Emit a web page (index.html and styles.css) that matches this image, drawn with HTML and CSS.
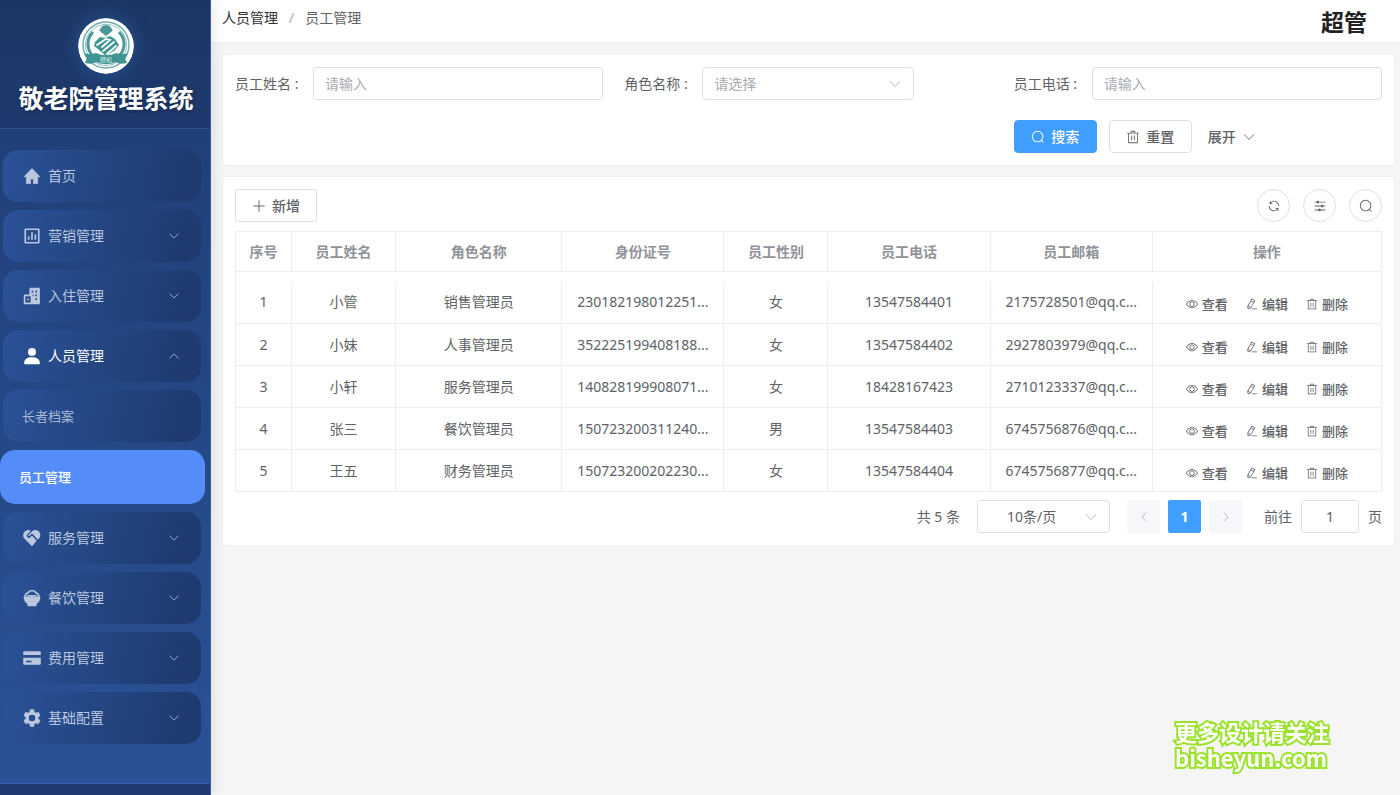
FILE: index.html
```html
<!DOCTYPE html>
<html lang="zh-CN">
<head>
<meta charset="utf-8">
<title>敬老院管理系统</title>
<link rel="stylesheet" href="styles.css">
</head>
<body>
<svg class="sprite" aria-hidden="true">
  <symbol id="down" viewBox="0 0 16 16"><path d="M2.500 5.300 8 10.700l5.500-5.400" fill="none" stroke="currentColor" stroke-linecap="round" stroke-linejoin="round"/></symbol>
  <symbol id="search" viewBox="0 0 1024 1024"><path d="m795.904 750.720 124.992 124.928a32 32 0 0 1-45.248 45.248L750.656 795.904a416 416 0 1 1 45.248-45.248zM480 832a352 352 0 1 0 0-704 352 352 0 0 0 0 704"/></symbol>
  <symbol id="trash" viewBox="0 0 1024 1024"><path d="M160 256H96a32 32 0 0 1 0-64h256V95.936a32 32 0 0 1 32-32h256a32 32 0 0 1 32 32V192h256a32 32 0 1 1 0 64h-64v672a32 32 0 0 1-32 32H192a32 32 0 0 1-32-32zm448-64v-64H416v64zM224 896h576V256H224zm192-128a32 32 0 0 1-32-32V416a32 32 0 0 1 64 0v320a32 32 0 0 1-32 32m192 0a32 32 0 0 1-32-32V416a32 32 0 0 1 64 0v320a32 32 0 0 1-32 32"/></symbol>
  <symbol id="view" viewBox="0 0 1024 1024"><path d="M512 160c320 0 512 352 512 352S832 864 512 864 0 512 0 512s192-352 512-352m0 64c-225.280 0-384.128 208.064-436.800 288 52.608 79.872 211.456 288 436.800 288 225.280 0 384.128-208.064 436.800-288-52.608-79.872-211.456-288-436.800-288m0 64a224 224 0 1 1 0 448 224 224 0 0 1 0-448m0 64a160.192 160.192 0 0 0-160 160c0 88.192 71.744 160 160 160s160-71.808 160-160-71.744-160-160-160"/></symbol>
  <symbol id="edit" viewBox="0 0 1024 1024"><path d="m199.040 672.640 193.984 112 224-387.968-193.920-112-224 388.032zm-23.872 60.160 32.896 148.288 144.896-45.696zM455.040 229.248l193.920 112 56.704-98.112-193.984-112-56.640 98.112zM104.320 708.800l384-665.024 304.768 175.936L409.152 884.800h.064l-248.448 78.336zm384 254.272v-64h448v64h-448z"/></symbol>
  <symbol id="refresh" viewBox="0 0 1024 1024"><path d="M771.776 794.880A384 384 0 0 1 128 512h64a320 320 0 0 0 555.712 216.448H654.720a32 32 0 1 1 0-64h149.056a32 32 0 0 1 32 32v148.928a32 32 0 1 1-64 0v-50.560zM276.288 295.616h92.992a32 32 0 0 1 0 64H220.160a32 32 0 0 1-32-32V178.560a32 32 0 0 1 64 0v50.560A384 384 0 0 1 896.128 512h-64a320 320 0 0 0-555.776-216.384z"/></symbol>
  <symbol id="operation" viewBox="0 0 1024 1024"><path d="M389.440 768a96.064 96.064 0 0 1 181.120 0H896v64H570.560a96.064 96.064 0 0 1-181.120 0H128v-64zm192-288a96.064 96.064 0 0 1 181.120 0H896v64H762.560a96.064 96.064 0 0 1-181.120 0H128v-64zm-320-288a96.064 96.064 0 0 1 181.120 0H896v64H442.560a96.064 96.064 0 0 1-181.120 0H128v-64z"/></symbol>
  <symbol id="plus" viewBox="0 0 16 16"><path d="M8 2v12M2 8h12" fill="none" stroke="currentColor" stroke-width="1.100" stroke-linecap="round"/></symbol>
  <symbol id="home" viewBox="0 0 24 24"><path d="M10 22v-6h4v6h5.500v-9H22.500L12 2 1.500 13h3v9z" stroke="currentColor" stroke-linejoin="round"/></symbol>
  <symbol id="chart" viewBox="0 0 24 24"><path d="M3 3h18v18H3zM7.500 12.500V17M12 7v10M16.500 10v7" fill="none" stroke="currentColor" stroke-width="2.200" stroke-linejoin="round"/></symbol>
  <symbol id="building" viewBox="0 0 24 24"><path fill-rule="evenodd" d="M10 1h11a1.500 1.500 0 0 1 1.500 1.500v19A1.500 1.500 0 0 1 21 23H2.500A1.500 1.500 0 0 1 1 21.500v-10A1.500 1.500 0 0 1 2.500 10h6V2.500A1.500 1.500 0 0 1 10 1zM3.200 12.200v8.600h7v-8.600zm2.500 3.300h2.300v2.300H5.700zM11.500 5v2.200h2.200V5zm5 0v2.200h2.200V5zm0 5v2.200h2.200V10zm0 5v2.200h2.200V15zm-3.500-5v2.200h1.200V10z"/></symbol>
  <symbol id="user" viewBox="0 0 24 24"><circle cx="12" cy="6.500" r="5.300"/><path d="M1.500 21.500C1.500 16 6 13.500 12 13.500s10.500 2.500 10.500 8c0 .8-.5 1.500-1.500 1.500H3c-1 0-1.500-.7-1.500-1.500z"/></symbol>
  <symbol id="care" viewBox="0 0 24 24"><path d="M12 23 1.700 12.600C-1.200 9 .3 4 3.800 2.200 6 1.100 8.700 1.300 10.400 2.300L5.700 7.200a2.700 2.700 0 0 0 4 3.700l2.200-2.100 6.300 7z"/><path d="m19.800 14.200-6.700-7.300a1.600 1.600 0 0 0-2.200 0L8.500 9.300a.9.900 0 0 1-1.300-1.300l5-5.100c3.400-2.400 7.300-1.700 9.500 1.100 2.500 3.300 1.600 7-1.900 10.200z"/></symbol>
  <symbol id="bowl" viewBox="0 0 24 24"><path d="M.8 10h22.400c0 4.500-2 8.200-5.200 10v3H6v-3C2.800 18.200.8 14.500.8 10z"/><path d="M2.500 10.500C3 7.500 4.500 5.500 6.800 5 8 2.800 10 2 12 2s4 .8 5.200 3c2.300.5 3.800 2.500 4.300 5.500" fill="none" stroke="currentColor" stroke-width="2.200"/><path d="M5 10c.5-1.500 1.500-2 3-2h8c1.500 0 2.500.5 3 2z"/></symbol>
  <symbol id="card" viewBox="0 0 24 24"><path fill-rule="evenodd" d="M1.500 3h21A1.200 1.200 0 0 1 23.700 4.200V8H.3V4.200A1.200 1.200 0 0 1 1.500 3zM.3 11.500h23.400v8.300a1.200 1.200 0 0 1-1.200 1.200h-21A1.200 1.200 0 0 1 .3 19.800zm3.700 4v2.300h7.500v-2.300z"/></symbol>
  <symbol id="gear" viewBox="2 2 20 20"><path d="M19.140 12.940c.04-.3.060-.61.060-.94s-.02-.64-.07-.94l2.030-1.580a.49.490 0 0 0 .12-.61l-1.920-3.320a.488.488 0 0 0-.59-.22l-2.390.96c-.5-.38-1.030-.7-1.620-.94l-.36-2.540a.484.484 0 0 0-.48-.41h-3.840c-.24 0-.43.170-.47.410l-.36 2.540c-.59.240-1.130.570-1.620.940l-2.390-.96a.477.477 0 0 0-.59.220L2.740 8.870c-.12.210-.08.470.12.610l2.030 1.580c-.05.300-.09.630-.09.940s.02.640.070.940l-2.030 1.580a.49.490 0 0 0-.12.610l1.920 3.320c.12.220.370.290.590.220l2.390-.96c.5.380 1.030.700 1.620.940l.36 2.540c.05.240.240.410.480.410h3.840c.24 0 .44-.17.470-.41l.36-2.540c.59-.24 1.130-.56 1.620-.94l2.390.96c.22.080.470 0 .59-.22l1.920-3.320c.12-.22.070-.47-.12-.61zM12 15.600a3.600 3.600 0 1 1 0-7.200 3.600 3.600 0 0 1 0 7.200z"/></symbol>
</svg>
<div class="app">
  <aside class="sidebar">
    <div class="brand">
      <svg class="logo" viewBox="0 0 56 56" role="img" aria-label="颐和">
        <circle cx="28" cy="28" r="28" fill="#fff"/>
        <g fill="none" stroke="#6fb0af"><circle cx="28" cy="27" r="23" stroke-width="1.500"/><circle cx="28" cy="27" r="20.500" stroke-width=".8"/></g>
        <path d="M15 14C8 21 9 31 14 37M41 14c7 7 6 17 1 23" fill="none" stroke="#4a9998" stroke-width="3"/>
        <path d="M23 10c1-3 3-2 5-3 2 1 4 0 5 3 2 1 2 3 0 4l-5 4-5-4c-2-1-2-3 0-4z" fill="#4a9998"/>
        <path d="m17 24 5-5 5 1 5-2 5 3 4 6-4 5-9 6-8-7-4-3z" fill="#3f9594"/>
        <path d="m19 27 9-6 4 1-8 7M25 33l11-9M29 36l9-8" fill="none" stroke="#fff" stroke-width="1.800" stroke-linecap="round"/>
        <path d="M6 35c5 2 9 1 12 0 6 3 14 3 20 0 3 1 7 2 12 0l-3 5 2 5c-5 1-8 1-11-1-7 3-13 3-20 0-3 2-6 2-11 1l2-5z" fill="#3f9594"/>
        <text class="logo-text" x="28" y="44" text-anchor="middle">颐和</text>
      </svg>
      <h1 class="brand-name">敬老院管理系统</h1>
    </div>
    <nav class="menu">
      <a class="item" href="#"><svg class="mi"><use href="#home"/></svg><span>首页</span></a>
      <a class="item" href="#"><svg class="mi"><use href="#chart"/></svg><span>营销管理</span><svg class="arrow"><use href="#down"/></svg></a>
      <a class="item" href="#"><svg class="mi"><use href="#building"/></svg><span>入住管理</span><svg class="arrow"><use href="#down"/></svg></a>
      <a class="item open" href="#"><svg class="mi"><use href="#user"/></svg><span>人员管理</span><svg class="arrow"><use href="#down"/></svg></a>
      <a class="item sub" href="#">长者档案</a>
      <a class="item sub active" href="#" aria-current="page">员工管理</a>
      <a class="item" href="#"><svg class="mi"><use href="#care"/></svg><span>服务管理</span><svg class="arrow"><use href="#down"/></svg></a>
      <a class="item" href="#"><svg class="mi"><use href="#bowl"/></svg><span>餐饮管理</span><svg class="arrow"><use href="#down"/></svg></a>
      <a class="item" href="#"><svg class="mi"><use href="#card"/></svg><span>费用管理</span><svg class="arrow"><use href="#down"/></svg></a>
      <a class="item" href="#"><svg class="mi"><use href="#gear"/></svg><span>基础配置</span><svg class="arrow"><use href="#down"/></svg></a>
    </nav>
    <div class="side-foot"></div>
  </aside>
  <div class="page">
    <header class="topbar">
      <nav class="crumbs"><a href="#">人员管理</a><span class="sep">/</span><span>员工管理</span></nav>
      <strong class="account">超管</strong>
    </header>
    <main class="content">
      <form class="card filters">
        <div class="field"><label for="name">员工姓名 :</label><input id="name" class="box" type="text" placeholder="请输入"></div>
        <div class="field"><label for="role">角色名称 :</label><span class="select role"><select id="role" class="box placeholder"><option>请选择</option></select><svg class="caret"><use href="#down"/></svg></span></div>
        <div class="field"><label for="phone">员工电话 :</label><input id="phone" class="box" type="text" placeholder="请输入"></div>
        <div class="actions">
          <button class="btn primary" type="button"><svg class="ic"><use href="#search"/></svg>搜索</button>
          <button class="btn" type="button"><svg class="ic"><use href="#trash"/></svg>重置</button>
          <button class="expand" type="button">展开<svg class="ic"><use href="#down"/></svg></button>
        </div>
      </form>
      <section class="card list">
        <div class="toolbar">
          <button class="btn" type="button"><svg class="ic"><use href="#plus"/></svg>新增</button>
          <div class="tools">
            <button class="round" type="button" aria-label="刷新"><svg class="ic"><use href="#refresh"/></svg></button>
            <button class="round" type="button" aria-label="列设置"><svg class="ic"><use href="#operation"/></svg></button>
            <button class="round" type="button" aria-label="搜索"><svg class="ic"><use href="#search"/></svg></button>
          </div>
        </div>
        <table class="table">
          <colgroup><col class="c-no"><col class="c-short"><col class="c-role"><col class="c-mid"><col class="c-short"><col class="c-mid"><col class="c-mid"><col class="c-ops"></colgroup>
          <thead><tr><th>序号</th><th>员工姓名</th><th>角色名称</th><th>身份证号</th><th>员工性别</th><th>员工电话</th><th>员工邮箱</th><th>操作</th></tr></thead>
          <tbody>
            <tr class="spacer"><td colspan="8"></td></tr>
            <tr><td>1</td><td>小管</td><td>销售管理员</td><td>230182198012251...</td><td>女</td><td>13547584401</td><td>2175728501@qq.c...</td><td><div class="ops"><button type="button"><svg><use href="#view"/></svg>查看</button><button type="button"><svg><use href="#edit"/></svg>编辑</button><button type="button"><svg><use href="#trash"/></svg>删除</button></div></td></tr>
            <tr><td>2</td><td>小妹</td><td>人事管理员</td><td>352225199408188...</td><td>女</td><td>13547584402</td><td>2927803979@qq.c...</td><td><div class="ops"><button type="button"><svg><use href="#view"/></svg>查看</button><button type="button"><svg><use href="#edit"/></svg>编辑</button><button type="button"><svg><use href="#trash"/></svg>删除</button></div></td></tr>
            <tr><td>3</td><td>小轩</td><td>服务管理员</td><td>140828199908071...</td><td>女</td><td>18428167423</td><td>2710123337@qq.c...</td><td><div class="ops"><button type="button"><svg><use href="#view"/></svg>查看</button><button type="button"><svg><use href="#edit"/></svg>编辑</button><button type="button"><svg><use href="#trash"/></svg>删除</button></div></td></tr>
            <tr><td>4</td><td>张三</td><td>餐饮管理员</td><td>150723200311240...</td><td>男</td><td>13547584403</td><td>6745756876@qq.c...</td><td><div class="ops"><button type="button"><svg><use href="#view"/></svg>查看</button><button type="button"><svg><use href="#edit"/></svg>编辑</button><button type="button"><svg><use href="#trash"/></svg>删除</button></div></td></tr>
            <tr><td>5</td><td>王五</td><td>财务管理员</td><td>150723200202230...</td><td>女</td><td>13547584404</td><td>6745756877@qq.c...</td><td><div class="ops"><button type="button"><svg><use href="#view"/></svg>查看</button><button type="button"><svg><use href="#edit"/></svg>编辑</button><button type="button"><svg><use href="#trash"/></svg>删除</button></div></td></tr>
          </tbody>
        </table>
        <div class="pager">
          <span>共 5 条</span>
          <span class="select size"><select class="box" aria-label="每页条数"><option>10条/页</option></select><svg class="caret"><use href="#down"/></svg></span>
          <div class="pages">
            <button class="pg" type="button" disabled aria-label="上一页"><svg class="prev"><use href="#down"/></svg></button>
            <button class="pg current" type="button">1</button>
            <button class="pg" type="button" disabled aria-label="下一页"><svg class="next"><use href="#down"/></svg></button>
          </div>
          <div class="jump"><label for="goto">前往</label><input id="goto" class="box" type="text" value="1"><span>页</span></div>
        </div>
      </section>
    </main>
  </div>
</div>
<div class="watermark"><span>更多设计请关注</span><span>bisheyun.com</span></div>
</body>
</html>
```

FILE: styles.css
```css
* { box-sizing: border-box; }

body {
  margin: 0;
  font: 14px/20px "Noto Sans", "Noto Sans CJK SC", sans-serif;
  color: #606266;
  background: #f5f5f5;
}

button, input, select { font: inherit; color: inherit; margin: 0; }
button { cursor: pointer; }
a { color: inherit; text-decoration: none; }
svg { fill: currentColor; flex: none; }
.sprite { position: absolute; width: 0; height: 0; }

.app { display: flex; min-height: 100vh; }

/* Sidebar */
.sidebar {
  position: relative;
  display: flex;
  flex-direction: column;
  flex: none;
  width: 211px;
  background: linear-gradient(180deg, #1e3c72 0%, #2a5298 100%);
  border-right: 1px solid #3a5f9f;
  box-shadow: 2px 0 12px rgba(0, 0, 0, 0.1);
}
.brand {
  display: flex;
  flex-direction: column;
  align-items: center;
  gap: 8px;
  height: 129px;
  padding: 18px 0 0 2px;
  background: linear-gradient(180deg, #1c3664, #1e3a6e);
  border-bottom: 1px solid #31508a;
}
.logo {
  width: 56px;
  height: 56px;
  border-radius: 50%;
  box-shadow: 0 0 20px rgba(64, 158, 255, 0.3);
}
.logo-text { font-size: 6px; fill: #d5ecec; }
.brand-name {
  margin: 0;
  font-size: 25px;
  line-height: 32px;
  font-weight: 700;
  color: #fff;
  white-space: nowrap;
  text-shadow: 0 2px 4px rgba(0, 0, 0, 0.3);
}
.menu {
  display: flex;
  flex-direction: column;
  flex: 1;
  gap: 8px;
  padding: 21px 9px 0 3px;
}
.item {
  display: flex;
  align-items: center;
  gap: 7px;
  height: 52px;
  padding: 0 21px 0 20px;
  border-radius: 15px;
  color: #bac7df;
  background: linear-gradient(105deg, #2a5298 0%, #23447f 55%, #1e3a6e 95%);
}
.item.open { color: #fff; }
.item.sub { font-size: 13px; color: #a9b9d6; padding-left: 19px; }
.item.sub.active {
  height: 54px;
  margin: 0 -4px 0 -3px;
  color: #fff;
  font-weight: 500;
  background: #548df7;
}
.mi { width: 18px; height: 18px; }
.arrow { width: 12px; height: 12px; margin-left: auto; }
.open .arrow { transform: rotate(180deg); color: #bac7df; }
.side-foot { height: 12px; background: #1e3a6e; border-top: 1px solid #2f62b5; }

/* Page */
.page { flex: 1; min-width: 0; }
.topbar {
  display: flex;
  justify-content: space-between;
  height: 43px;
  padding: 0 33px 0 11px;
  background: #fff;
  border-bottom: 1px solid #eee;
}
.crumbs { display: flex; gap: 11px; line-height: 36px; }
.crumbs a { color: #303133; }
.crumbs .sep { color: #a8abb2; }
.account { font-size: 23px; line-height: 44px; color: #222; }
.content {
  display: flex;
  flex-direction: column;
  gap: 10px;
  padding: 11px 5px 11px 11px;
}
.card { background: #fff; border: 1px solid #f0f0f0; border-radius: 4px; padding: 12px; }

/* Filters */
.filters {
  display: grid;
  grid-template-columns: repeat(3, minmax(0, 1fr));
  gap: 20px 21px;
}
.field { display: grid; grid-template-columns: 66px minmax(0, 1fr); gap: 12px; align-items: center; }
.field label { white-space: nowrap; }
.box {
  width: 100%;
  height: 33px;
  padding: 0 11px;
  background: #fff;
  border: 1px solid #dcdfe6;
  border-radius: 4px;
  outline: none;
}
.box::placeholder { color: #a8abb2; opacity: 1; }
.box.placeholder { color: #a8abb2; }
.select { position: relative; display: block; }
.select select { appearance: none; display: block; }
.role { width: 73%; }
.caret {
  position: absolute;
  right: 12px;
  top: 10px;
  width: 14px;
  height: 14px;
  color: #a8abb2;
  pointer-events: none;
}
.actions { grid-column: 3; display: flex; gap: 12px; }
.btn {
  display: flex;
  align-items: center;
  justify-content: center;
  gap: 6px;
  height: 33px;
  padding: 0 16px;
  font-weight: 500;
  background: #fff;
  border: 1px solid #dcdfe6;
  border-radius: 4px;
}
.primary { color: #fff; background: #409eff; border-color: #409eff; }
.actions .btn { width: 83px; padding: 0; }
.ic { width: 14px; height: 14px; }
.expand {
  display: flex;
  align-items: center;
  gap: 6px;
  padding: 0 4px;
  font-weight: 500;
  background: none;
  border: 0;
}

/* List */
.toolbar { display: flex; justify-content: space-between; margin-bottom: 9px; }
.tools { display: flex; gap: 13px; }
.round {
  display: grid;
  place-items: center;
  width: 33px;
  height: 33px;
  padding: 0;
  background: #fff;
  border: 1px solid #dcdfe6;
  border-radius: 50%;
}
.table {
  width: 100%;
  table-layout: fixed;
  border-collapse: collapse;
  text-align: center;
}
.c-no { width: 56px; }
.c-short { width: 104px; }
.c-role { width: 166px; }
.c-mid { width: 162px; }
.c-ops { width: 229px; }
.table th, .table td {
  height: 42px;
  padding: 0;
  border: 1px solid #ebeef5;
  white-space: nowrap;
}
.table th { height: 40px; color: #909399; font-weight: 700; }
.table .spacer td { height: 10px; border-bottom: 0; }
.spacer + tr td { border-top: 0; }
.ops { display: flex; justify-content: center; gap: 18px; padding-top: 4px; }
.ops button {
  display: flex;
  align-items: center;
  gap: 4px;
  padding: 0;
  font-size: 13px;
  font-weight: 500;
  background: none;
  border: 0;
}
.ops svg { width: 12px; height: 12px; }

.pager {
  display: flex;
  align-items: center;
  justify-content: flex-end;
  gap: 17px;
  margin-top: 8px;
}
.size { width: 133px; }
.size select { padding-left: 29px; }
.pages { display: flex; gap: 8px; }
.pg {
  display: grid;
  place-items: center;
  width: 33px;
  height: 33px;
  padding: 0;
  color: #a8abb2;
  background: #f5f7fa;
  border: 0;
  border-radius: 2px;
}
.pg.current { color: #fff; background: #409eff; font-weight: 700; }
.pg svg { width: 12px; height: 12px; }
.prev { transform: rotate(90deg); }
.next { transform: rotate(-90deg); }
.jump { display: flex; align-items: center; gap: 9px; margin-left: 5px; }
.jump input { width: 58px; text-align: center; }

.watermark {
  position: fixed;
  right: 71px;
  bottom: 25px;
  display: flex;
  flex-direction: column;
  font: 700 22px/26px "Noto Sans CJK SC", sans-serif;
  color: #fff;
  -webkit-text-stroke: 4px #9be22d;
  paint-order: stroke fill;
}
```
